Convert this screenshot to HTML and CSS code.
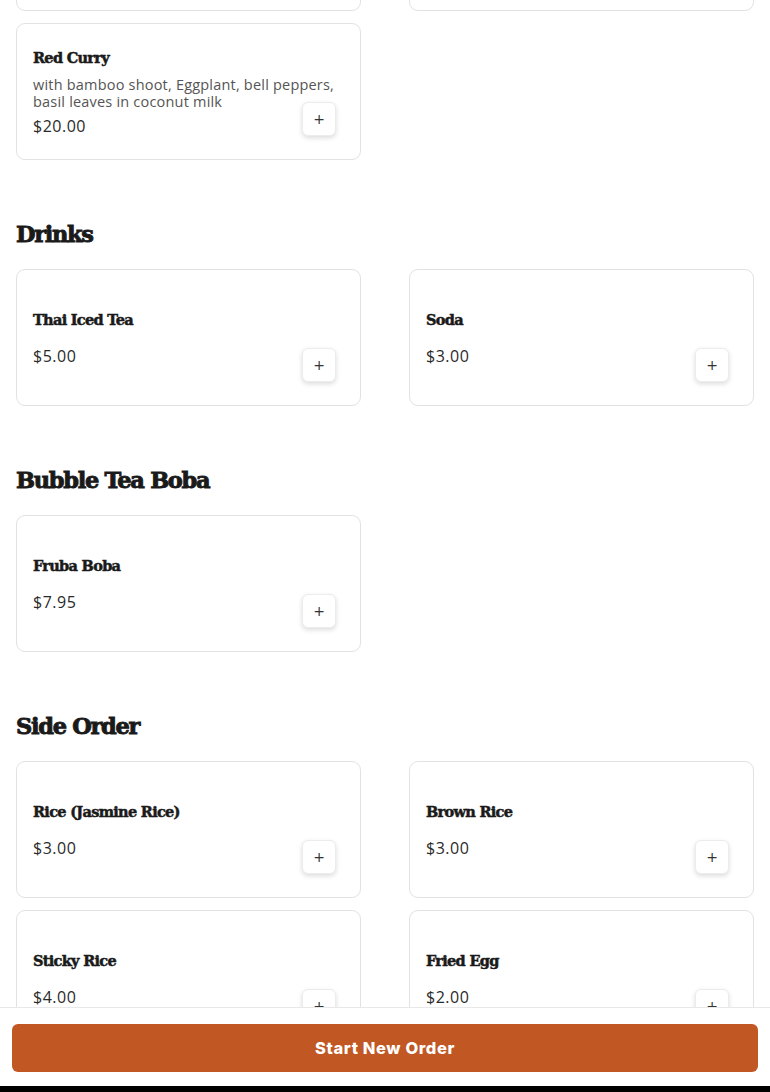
FILE: index.html
```html
<!DOCTYPE html>
<html lang="en">
<head>
<meta charset="utf-8">
<title>Menu</title>
<link rel="stylesheet" href="styles.css">
</head>
<body>
<main class="menu">
  <section class="section first">
    <div class="grid">
      <div class="card">
        <div class="name">Green Curry</div>
        <div class="desc">with bamboo shoot, Eggplant, bell peppers, basil leaves in coconut milk</div>
        <div class="price">$20.00</div>
        <button class="add" type="button">+</button>
      </div>
      <div class="card">
        <div class="name">Yellow Curry</div>
        <div class="desc">with potatoes, onions, carrots in coconut milk</div>
        <div class="price">$20.00</div>
        <button class="add" type="button">+</button>
      </div>
      <div class="card">
        <div class="name">Red Curry</div>
        <div class="desc">with bamboo shoot, Eggplant, bell peppers, basil leaves in coconut milk</div>
        <div class="price">$20.00</div>
        <button class="add" type="button">+</button>
      </div>
    </div>
  </section>

  <section class="section">
    <h2 class="title">Drinks</h2>
    <div class="grid">
      <div class="card">
        <div class="name">Thai Iced Tea</div>
        <div class="price">$5.00</div>
        <button class="add" type="button">+</button>
      </div>
      <div class="card">
        <div class="name">Soda</div>
        <div class="price">$3.00</div>
        <button class="add" type="button">+</button>
      </div>
    </div>
  </section>

  <section class="section">
    <h2 class="title">Bubble Tea Boba</h2>
    <div class="grid">
      <div class="card">
        <div class="name">Fruba Boba</div>
        <div class="price">$7.95</div>
        <button class="add" type="button">+</button>
      </div>
    </div>
  </section>

  <section class="section">
    <h2 class="title">Side Order</h2>
    <div class="grid">
      <div class="card">
        <div class="name">Rice (Jasmine Rice)</div>
        <div class="price">$3.00</div>
        <button class="add" type="button">+</button>
      </div>
      <div class="card">
        <div class="name">Brown Rice</div>
        <div class="price">$3.00</div>
        <button class="add" type="button">+</button>
      </div>
      <div class="card">
        <div class="name">Sticky Rice</div>
        <div class="price">$4.00</div>
        <button class="add" type="button">+</button>
      </div>
      <div class="card">
        <div class="name">Fried Egg</div>
        <div class="price">$2.00</div>
        <button class="add" type="button">+</button>
      </div>
    </div>
  </section>
</main>

<footer class="footer">
  <div class="footer-inner">
    <button class="start" type="button">Start New Order</button>
  </div>
  <div class="home-bar"></div>
</footer>
</body>
</html>
```

FILE: styles.css
```css
* { box-sizing: border-box; }

html, body {
  margin: 0;
  padding: 0;
  background: #ffffff;
}

body {
  font-family: "Open Sans", "Liberation Sans", sans-serif;
  color: #1c1c1c;
  overflow: hidden;
  height: 1092px;
}

.menu {
  padding: 0 16px 120px;
  margin-top: -126px;
}

.section {
  padding-top: 58px;
}

.section.first {
  padding-top: 0;
}

.title {
  margin: 0 0 19px;
  font-family: "DejaVu Serif", "Liberation Serif", serif;
  font-weight: 900;
  font-size: 22.5px;
  line-height: 32px;
  letter-spacing: -1.3px;
  -webkit-text-stroke: 0.9px #1a1a1a;
  color: #1a1a1a;
}

.grid {
  display: grid;
  grid-template-columns: 1fr 1fr;
  column-gap: 48px;
  row-gap: 12px;
}

.card {
  position: relative;
  min-height: 137px;
  border: 1px solid #e2e2e2;
  border-radius: 9px;
  padding: 16px 15px 16px 16px;
  display: flex;
  flex-direction: column;
  justify-content: center;
  background: #fff;
}

.name {
  font-family: "DejaVu Serif", "Liberation Serif", serif;
  font-weight: 900;
  font-size: 14.5px;
  line-height: 20px;
  letter-spacing: -0.7px;
  -webkit-text-stroke: 0.5px #1a1a1a;
  color: #1a1a1a;
}

.desc {
  margin-top: 8px;
  font-size: 14.5px;
  line-height: 17px;
  letter-spacing: 0.2px;
  color: #555;
}

.price {
  margin-top: 16px;
  font-size: 16px;
  line-height: 20px;
  letter-spacing: 0.5px;
  color: #2a2a2a;
}

.desc + .price {
  margin-top: 6px;
}

.add {
  position: absolute;
  right: 24px;
  bottom: 23px;
  width: 34px;
  height: 34px;
  border: 1px solid #ececec;
  border-radius: 6px;
  background: #fff;
  box-shadow: 0 2px 5px rgba(0, 0, 0, 0.14);
  font-family: "DejaVu Sans", sans-serif;
  font-size: 14px;
  line-height: 1;
  color: #333;
  padding: 0;
}

.footer {
  position: fixed;
  left: 0;
  right: 0;
  bottom: 0;
  background: #fff;
  border-top: 1px solid #e8e8e8;
}

.footer-inner {
  padding: 16px 12px 14px;
}

.start {
  display: block;
  width: 100%;
  height: 48px;
  border: 0;
  border-radius: 6px;
  background: #c15722;
  color: #fff;
  font-family: "Inter", "Open Sans", sans-serif;
  font-weight: 800;
  font-size: 16.5px;
  letter-spacing: 0.6px;
}

.home-bar {
  height: 6px;
  background: #000;
}
```
